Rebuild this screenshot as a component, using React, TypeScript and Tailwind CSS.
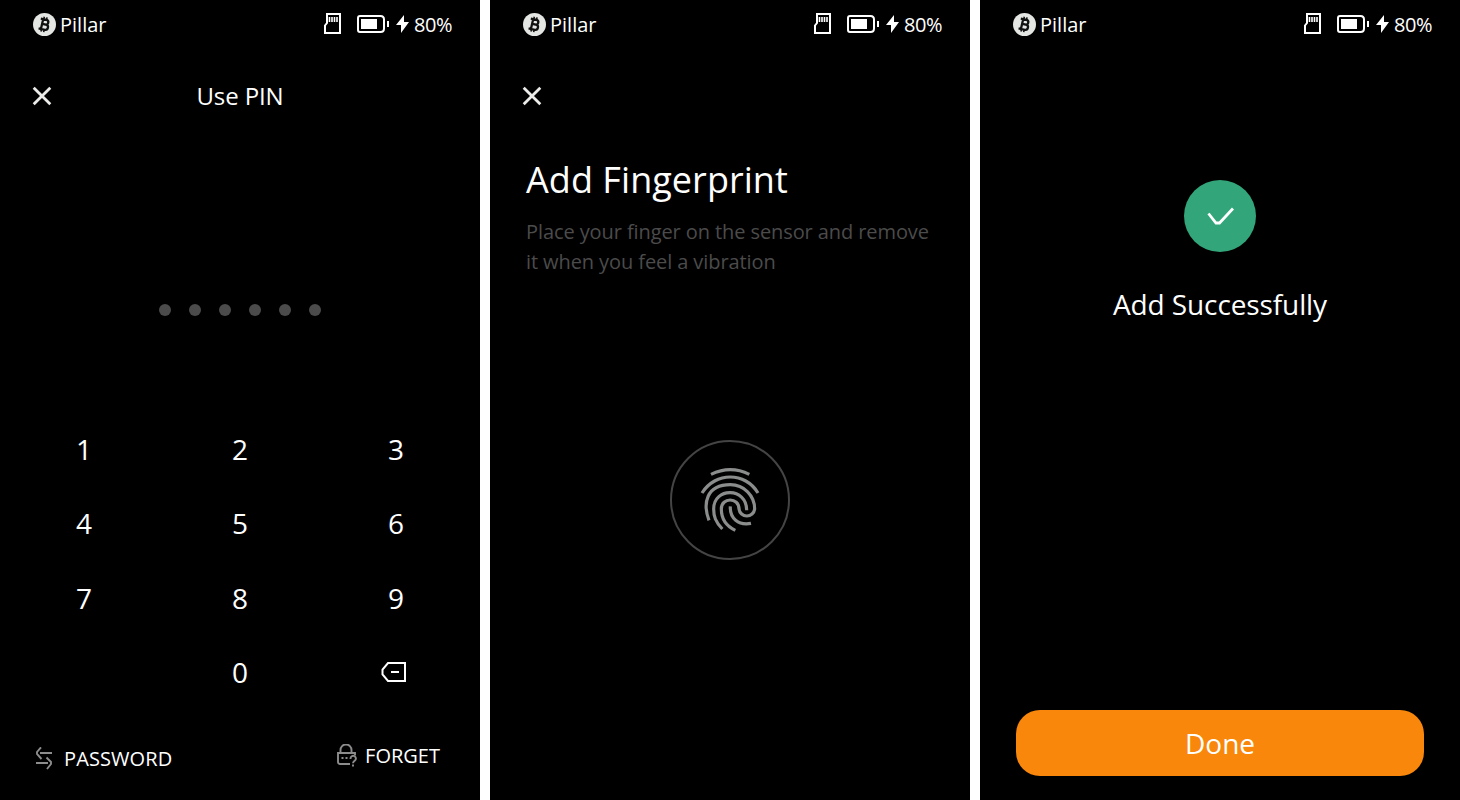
import type { ReactNode } from "react";

function StatusBar() {
  return (
    <div className="flex h-12 shrink-0 items-center pl-[33px] pr-7 text-xl leading-none">
      <svg className="h-[23px] w-[23px]" viewBox="0 0 23 23">
        <circle cx="11.5" cy="11.5" r="11.5" fill="#e4e6e3" />
        <g transform="rotate(13 11.5 11.5)" fill="none" stroke="#111" strokeWidth="2.3">
          <path d="M9 6.600v10M6.600 6.600h5.800a2.300 2.300 0 0 1 0 4.700H9M6.600 16.600h6.400a2.500 2.500 0 0 0 0-5.200H9" />
          <path d="M9.600 4v2.700M12.400 4v2.700M9.600 16.400v2.700M12.400 16.400v2.700" strokeWidth="1.6" />
        </g>
      </svg>
      <span className="ml-1 pt-0.5">Pillar</span>
      <svg className="ml-auto h-[22px] w-[18px]" viewBox="0 0 18 22" fill="none" stroke="#fff">
        <path d="M3 1h13v19H1v-7.500l2-2.500z" strokeWidth="2" />
        <path d="M5.500 4v5M8 4v5M10.500 4v5M13 4v5" strokeWidth="1.6" />
      </svg>
      <svg className="ml-[15px] h-[18px] w-8" viewBox="0 0 32 18" fill="none">
        <path d="M3 1h20.500q3.500 0 3.500 3.500v9q0 3.500-3.500 3.500H3a2 2 0 0 1-2-2V3a2 2 0 0 1 2-2z" stroke="#fff" strokeWidth="2" />
        <path d="M4 4h16v10H4zM30 6h2v6h-2z" fill="#fff" />
      </svg>
      <svg className="ml-[7px] h-[18px] w-[13px]" viewBox="0 0 13 18">
        <path d="M8 0 0 10h5v8l8-11H8z" fill="#fff" />
      </svg>
      <span className="ml-[5px] pt-0.5 tracking-[-0.45px]">80%</span>
    </div>
  );
}

function Screen({ children }: { children: ReactNode }) {
  return (
    <section className="flex h-[800px] w-[480px] flex-col overflow-hidden bg-black text-white">
      <StatusBar />
      {children}
    </section>
  );
}

function CloseIcon() {
  return (
    <svg className="h-5 w-5" viewBox="0 0 20 20" fill="none" stroke="#ececea" strokeWidth="2.8">
      <path d="m1.700 1.700 16.600 16.600M18.300 1.700 1.700 18.300" />
    </svg>
  );
}

function BackspaceIcon() {
  return (
    <svg className="block h-5 w-[26px]" viewBox="0 0 26 20" fill="none" stroke="#fff" strokeWidth="2">
      <path d="M7 1h17v18H7L1.500 12.500v-5zM10 10h8" />
    </svg>
  );
}

function SwapIcon() {
  return (
    <svg className="h-6 w-4" viewBox="0 -1 16 24" fill="none" stroke="#8c8c8c" strokeWidth="1.9">
      <path d="M16 5H4M5-.700 1 4v2l4.500 5M0 15h12M10.500 9.500l4.500 4.500v2L11 21" />
    </svg>
  );
}

function LockIcon() {
  return (
    <svg className="-mt-0.5 h-[23px] w-5" viewBox="0 0 20 23" fill="none" stroke="#8c8c8c" strokeWidth="1.9">
      <path d="M13 20H3a2 2 0 0 1-2-2V9h17v2.500M3.500 9V6a5.500 5.500 0 0 1 11 0v3" />
      <path d="M4.500 14h2M8.500 14h2" strokeWidth="2" />
      <path d="M13.500 15v-.5a2.700 2.700 0 1 1 4.400 2.100c-1.100.9-1.900 1.200-1.900 2.700M16 20.500v2" />
    </svg>
  );
}

function FingerprintIcon() {
  return (
    <svg
      className="h-[66px] w-[60px]"
      viewBox="120 112 180 198"
      fill="none"
      stroke="#8b8d8c"
      strokeWidth="9.5"
    >
      <path d="M153 134Q211 106 268 134" />
      <path d="M126 190C166 126 256 126 294 190" />
      <path d="M147 272C128 222 138 165 211 165C252 165 284 198 284 238A23.700 24 0 0 1 237 238C237 202 184 202 184 238C184 268 198 289 226 302" />
      <path d="M187 298C166 276 161 260 161 238C161 172 260 172 260 242" />
      <path d="M211 230C209 266 235 288 273 281" />
    </svg>
  );
}

const keys = ["1", "2", "3", "4", "5", "6", "7", "8", "9", "", "0", "back"];

function PinScreen() {
  return (
    <Screen>
      <header className="grid h-24 grid-cols-[1fr_auto_1fr] items-center px-8">
        <CloseIcon />
        <h1 className="text-2xl leading-8 tracking-[-0.1px]">Use PIN</h1>
      </header>
      <div className="mt-40 flex justify-center gap-[18px]">
        {Array.from({ length: 6 }, (_, i) => (
          <span key={i} className="h-3 w-3 rounded-full bg-[#4b4b4b]" />
        ))}
      </div>
      <div className="mt-24 grid h-[298px] grid-cols-3 grid-rows-[74px_73px_77px_71px] px-1.5 text-[28px]">
        {keys.map((key) => (
          <div key={key || "blank"} className="flex items-center justify-center">
            {key === "back" ? <span className="-ml-1 pt-[1px]"><BackspaceIcon /></span> : key}
          </div>
        ))}
      </div>
      <footer className="mt-7 flex items-start justify-between pl-9 pr-10 text-xl leading-7">
        <div className="mt-[7px] flex items-center gap-3 tracking-[0.1px]">
          <SwapIcon />
          PASSWORD
        </div>
        <div className="mt-1 flex items-center gap-2">
          <LockIcon />
          FORGET
        </div>
      </footer>
    </Screen>
  );
}

function FingerprintScreen() {
  return (
    <Screen>
      <header className="flex h-24 items-center px-8">
        <CloseIcon />
      </header>
      <div className="h-74 pl-9 pt-2.5">
        <h1 className="text-4xl leading-[52px] tracking-[0.05px]">Add Fingerprint</h1>
        <p className="mt-[11px] text-xl leading-[30px] tracking-[-0.09px] text-[#4b4b4b]">
          Place your finger on the sensor and remove
          <br />
          it when you feel a vibration
        </p>
      </div>
      <div className="mx-auto flex h-30 w-30 items-center justify-center rounded-full border-2 border-[#444]">
        <FingerprintIcon />
      </div>
    </Screen>
  );
}

function SuccessScreen() {
  return (
    <Screen>
      <div className="mt-33 flex flex-1 flex-col items-center">
        <div className="flex h-18 w-18 items-center justify-center rounded-full bg-[#32a67a]">
          <svg className="h-[18px] w-[27px]" viewBox="0 0 27 18" fill="none" stroke="#fff" strokeWidth="2.8">
            <path d="m1.500 6.500 7.500 9.500h3.500L26 1.500" />
          </svg>
        </div>
        <h1 className="mt-[31px] text-[28px] leading-[42px] tracking-[-0.11px]">Add Successfully</h1>
      </div>
      <button className="mx-9 mb-6 h-[66px] rounded-[24px] bg-[#f8870b] text-[28px]">Done</button>
    </Screen>
  );
}

export default function App() {
  return (
    <main className="flex h-[800px] w-[1460px] gap-2.5 bg-white font-['Open_Sans','Noto_Sans',sans-serif]">
      <PinScreen />
      <FingerprintScreen />
      <SuccessScreen />
    </main>
  );
}
